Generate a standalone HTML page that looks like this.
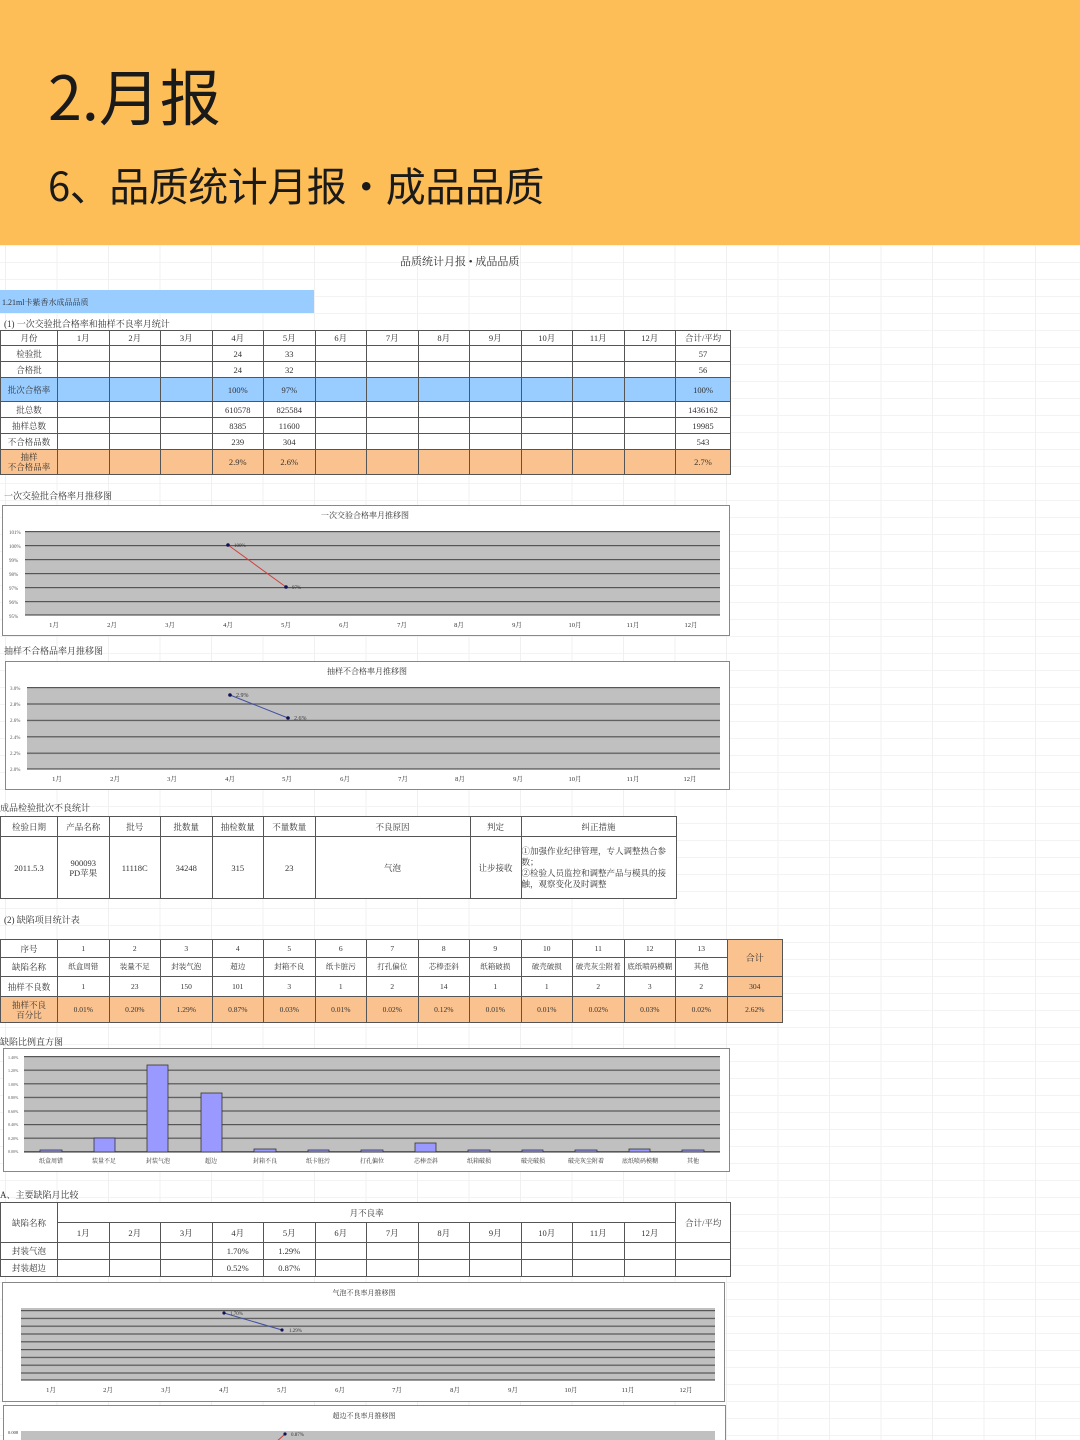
<!DOCTYPE html>
<html><head><meta charset="utf-8"><style>
*{margin:0;padding:0;box-sizing:border-box}
body{width:1080px;height:1440px;overflow:hidden;background:#fff;position:relative;font-family:"Liberation Sans","Noto Sans CJK SC",sans-serif;color:#222}
.hdr{position:absolute;left:0;top:0;width:1080px;height:245px;background:#FDBE58}
.h1{position:absolute;left:48px;top:54px;font-size:61px;color:#1a1a1a;font-family:"Noto Sans CJK SC",sans-serif;line-height:80px}
.h2{position:absolute;left:48px;top:156px;font-size:40px;color:#1a1a1a;font-family:"Noto Sans CJK SC",sans-serif;line-height:56px;letter-spacing:-0.5px}
.grid{position:absolute;left:0;top:245px;width:1080px;height:1195px;background-image:linear-gradient(90deg,#f0f0f0 1px,transparent 1px),linear-gradient(#f3f3f3 1px,transparent 1px);background-size:51.5px 100%,100% 17px;background-position:5px 0,0 0}
.t{position:absolute;font-size:9px;color:#333;white-space:nowrap;font-family:"Liberation Serif","Noto Serif CJK SC",serif}
table{position:absolute;border-collapse:collapse;table-layout:fixed;font-family:"Liberation Serif","Noto Serif CJK SC",serif;font-size:8.5px;color:#333;background:#fff}
td{border:1px solid #555;text-align:center;padding:0;overflow:hidden;line-height:10px}
.b td{background:#99CCFF}
.o td{background:#FAC28E}
.oc{background:#FAC28E}
svg{position:absolute;left:0;top:0}
</style></head><body>
<div class="hdr"><div class="h1">2.月报</div><div class="h2">6、品质统计月报·成品品质</div></div>
<div class="grid"></div>
<div class="t" style="left:400px;top:253px;font-size:11px">品质统计月报 • 成品品质</div>
<div style="position:absolute;left:0;top:290px;width:314px;height:23px;background:#99CCFF"></div>
<div class="t" style="left:2px;top:297px;font-size:8px">1.21ml卡紫香水成品品质</div>
<div class="t" style="left:4px;top:317px">(1) 一次交验批合格率和抽样不良率月统计</div>

<table style="left:0;top:330px;width:730px">
<colgroup><col style="width:57px"><col span="12" style="width:51.5px"><col style="width:55px"></colgroup>
<tr style="height:15px"><td>月份</td><td>1月</td><td>2月</td><td>3月</td><td>4月</td><td>5月</td><td>6月</td><td>7月</td><td>8月</td><td>9月</td><td>10月</td><td>11月</td><td>12月</td><td>合计/平均</td></tr>
<tr style="height:16px"><td>检验批</td><td></td><td></td><td></td><td>24</td><td>33</td><td></td><td></td><td></td><td></td><td></td><td></td><td></td><td>57</td></tr>
<tr style="height:16px"><td>合格批</td><td></td><td></td><td></td><td>24</td><td>32</td><td></td><td></td><td></td><td></td><td></td><td></td><td></td><td>56</td></tr>
<tr class="b" style="height:24px"><td>批次合格率</td><td></td><td></td><td></td><td>100%</td><td>97%</td><td></td><td></td><td></td><td></td><td></td><td></td><td></td><td>100%</td></tr>
<tr style="height:16px"><td>批总数</td><td></td><td></td><td></td><td>610578</td><td>825584</td><td></td><td></td><td></td><td></td><td></td><td></td><td></td><td>1436162</td></tr>
<tr style="height:16px"><td>抽样总数</td><td></td><td></td><td></td><td>8385</td><td>11600</td><td></td><td></td><td></td><td></td><td></td><td></td><td></td><td>19985</td></tr>
<tr style="height:16px"><td>不合格品数</td><td></td><td></td><td></td><td>239</td><td>304</td><td></td><td></td><td></td><td></td><td></td><td></td><td></td><td>543</td></tr>
<tr class="o" style="height:25px"><td>抽样<br>不合格品率</td><td></td><td></td><td></td><td>2.9%</td><td>2.6%</td><td></td><td></td><td></td><td></td><td></td><td></td><td></td><td>2.7%</td></tr>
</table>

<div class="t" style="left:4px;top:489px">一次交验批合格率月推移图</div>
<div class="t" style="left:4px;top:644px">抽样不合格品率月推移图</div>
<div class="t" style="left:0;top:801px">成品检验批次不良统计</div>

<table style="left:0;top:816px;width:675px">
<colgroup><col style="width:57px"><col span="5" style="width:51.5px"><col style="width:155px"><col style="width:51px"><col style="width:155px"></colgroup>
<tr style="height:20px"><td>检验日期</td><td>产品名称</td><td>批号</td><td>批数量</td><td>抽检数量</td><td>不量数量</td><td>不良原因</td><td>判定</td><td>纠正措施</td></tr>
<tr style="height:62px"><td>2011.5.3</td><td>900093<br>PD苹果</td><td>11118C</td><td>34248</td><td>315</td><td>23</td><td>气泡</td><td>让步接收</td><td style="text-align:left;white-space:normal;line-height:11px">①加强作业纪律管理，专人调整热合参数；<br>②检验人员监控和调整产品与模具的接触，观察变化及时调整</td></tr>
</table>

<div class="t" style="left:4px;top:913px">(2) 缺陷项目统计表</div>

<table style="left:0;top:939px;width:782px;font-size:7.5px">
<colgroup><col style="width:57px"><col span="13" style="width:51.5px"><col style="width:55.5px"></colgroup>
<tr style="height:18px"><td style="font-size:8.5px">序号</td><td>1</td><td>2</td><td>3</td><td>4</td><td>5</td><td>6</td><td>7</td><td>8</td><td>9</td><td>10</td><td>11</td><td>12</td><td>13</td><td class="oc" rowspan="2" style="font-size:9px">合计</td></tr>
<tr style="height:19px"><td style="font-size:8.5px">缺陷名称</td><td>纸盒周错</td><td>装量不足</td><td>封装气泡</td><td>超边</td><td>封箱不良</td><td>纸卡脏污</td><td>打孔偏位</td><td>芯棒歪斜</td><td>纸箱破损</td><td>破壳破损</td><td>破壳灰尘附着</td><td>底纸喷码模糊</td><td>其他</td></tr>
<tr style="height:20px"><td style="font-size:8.5px">抽样不良数</td><td>1</td><td>23</td><td>150</td><td>101</td><td>3</td><td>1</td><td>2</td><td>14</td><td>1</td><td>1</td><td>2</td><td>3</td><td>2</td><td class="oc">304</td></tr>
<tr class="o" style="height:26px"><td style="font-size:8.5px">抽样不良<br>百分比</td><td>0.01%</td><td>0.20%</td><td>1.29%</td><td>0.87%</td><td>0.03%</td><td>0.01%</td><td>0.02%</td><td>0.12%</td><td>0.01%</td><td>0.01%</td><td>0.02%</td><td>0.03%</td><td>0.02%</td><td>2.62%</td></tr>
</table>

<div class="t" style="left:0;top:1035px">缺陷比例直方图</div>
<div class="t" style="left:0;top:1188px">A、主要缺陷月比较</div>

<table style="left:0;top:1202px;width:730px">
<colgroup><col style="width:57px"><col span="12" style="width:51.5px"><col style="width:55px"></colgroup>
<tr style="height:20px"><td rowspan="2">缺陷名称</td><td colspan="12">月不良率</td><td rowspan="2">合计/平均</td></tr>
<tr style="height:20px"><td>1月</td><td>2月</td><td>3月</td><td>4月</td><td>5月</td><td>6月</td><td>7月</td><td>8月</td><td>9月</td><td>10月</td><td>11月</td><td>12月</td></tr>
<tr style="height:17px"><td>封装气泡</td><td></td><td></td><td></td><td>1.70%</td><td>1.29%</td><td></td><td></td><td></td><td></td><td></td><td></td><td></td><td></td></tr>
<tr style="height:17px"><td>封装超边</td><td></td><td></td><td></td><td>0.52%</td><td>0.87%</td><td></td><td></td><td></td><td></td><td></td><td></td><td></td><td></td></tr>
</table>

<svg width="1080" height="1440" viewBox="0 0 1080 1440" font-family="Liberation Serif,Noto Serif CJK SC,serif" font-size="7" fill="#333">
<defs>
<pattern id="g14" width="10" height="14" patternUnits="userSpaceOnUse" y="531"><rect width="10" height="14" fill="#c0c0c0"/><rect width="10" height="1.2" fill="#555"/></pattern>
<pattern id="g16" width="10" height="16.4" patternUnits="userSpaceOnUse" y="687"><rect width="10" height="16.4" fill="#c0c0c0"/><rect width="10" height="1.2" fill="#555"/></pattern>
<pattern id="g13" width="10" height="13.6" patternUnits="userSpaceOnUse" y="1056"><rect width="10" height="13.6" fill="#c0c0c0"/><rect width="10" height="1.2" fill="#555"/></pattern>
<pattern id="g8" width="10" height="7.8" patternUnits="userSpaceOnUse" y="1310"><rect width="10" height="7.8" fill="#c0c0c0"/><rect width="10" height="1.2" fill="#555"/></pattern>
</defs>
<rect x="2.5" y="505.5" width="727" height="130" fill="#fff" stroke="#888"/>
<text x="365" y="518" font-size="8" text-anchor="middle">一次交验合格率月推移图</text>
<rect x="25" y="531" width="695" height="84" fill="url(#g14)"/>
<line x1="25" y1="615" x2="720" y2="615" stroke="#333"/>
<g font-size="5" fill="#555"><text x="9" y="534">101%</text><text x="9" y="548">100%</text><text x="9" y="562">99%</text><text x="9" y="576">98%</text><text x="9" y="590">97%</text><text x="9" y="604">96%</text><text x="9" y="618">95%</text></g>
<line x1="228" y1="545" x2="286" y2="587" stroke="#d04040" stroke-width="1"/>
<circle cx="228" cy="545" r="1.8" fill="#115"/><circle cx="286" cy="587" r="1.8" fill="#115"/>
<text x="234" y="547" font-size="5">100%</text><text x="292" y="589" font-size="5">97%</text>
<g text-anchor="middle" font-size="6.5"><text x="54" y="627">1月</text><text x="112" y="627">2月</text><text x="170" y="627">3月</text><text x="228" y="627">4月</text><text x="286" y="627">5月</text><text x="344" y="627">6月</text><text x="402" y="627">7月</text><text x="459" y="627">8月</text><text x="517" y="627">9月</text><text x="575" y="627">10月</text><text x="633" y="627">11月</text><text x="691" y="627">12月</text></g>
<rect x="5.5" y="661.5" width="724" height="128" fill="#fff" stroke="#888"/>
<text x="367" y="674" font-size="8" text-anchor="middle">抽样不合格率月推移图</text>
<rect x="27" y="687" width="693" height="82" fill="url(#g16)"/>
<line x1="27" y1="769" x2="720" y2="769" stroke="#333"/>
<g font-size="5" fill="#555"><text x="10" y="690">3.0%</text><text x="10" y="706">2.8%</text><text x="10" y="722">2.6%</text><text x="10" y="739">2.4%</text><text x="10" y="755">2.2%</text><text x="10" y="771">2.0%</text></g>
<line x1="230" y1="695" x2="288" y2="718" stroke="#4050a0" stroke-width="1"/>
<circle cx="230" cy="695" r="1.8" fill="#115"/><circle cx="288" cy="718" r="1.8" fill="#115"/>
<text x="236" y="697" font-size="6">2.9%</text><text x="294" y="720" font-size="6">2.6%</text>
<g text-anchor="middle" font-size="6.5"><text x="57" y="781">1月</text><text x="115" y="781">2月</text><text x="172" y="781">3月</text><text x="230" y="781">4月</text><text x="287" y="781">5月</text><text x="345" y="781">6月</text><text x="403" y="781">7月</text><text x="460" y="781">8月</text><text x="518" y="781">9月</text><text x="575" y="781">10月</text><text x="633" y="781">11月</text><text x="690" y="781">12月</text></g>
<rect x="3.5" y="1048.5" width="726" height="123" fill="#fff" stroke="#888"/>
<rect x="24" y="1056" width="696" height="96" fill="url(#g13)"/>
<line x1="24" y1="1152" x2="720" y2="1152" stroke="#333"/>
<g font-size="4" fill="#555"><text x="8" y="1059">1.40%</text><text x="8" y="1072">1.20%</text><text x="8" y="1086">1.00%</text><text x="8" y="1099">0.80%</text><text x="8" y="1113">0.60%</text><text x="8" y="1126">0.40%</text><text x="8" y="1140">0.20%</text><text x="8" y="1153">0.00%</text></g>
<g fill="#9999ff" stroke="#333" stroke-width="0.8">
<rect x="40" y="1150" width="22" height="2"/><rect x="94" y="1138" width="21" height="14"/><rect x="147" y="1065" width="21" height="87"/><rect x="201" y="1093" width="21" height="59"/><rect x="254" y="1149" width="22" height="3"/><rect x="308" y="1150" width="21" height="2"/><rect x="361" y="1150" width="22" height="2"/><rect x="415" y="1143" width="21" height="9"/><rect x="468" y="1150" width="22" height="2"/><rect x="522" y="1150" width="21" height="2"/><rect x="575" y="1150" width="22" height="2"/><rect x="629" y="1149" width="21" height="3"/><rect x="682" y="1150" width="22" height="2"/>
</g>
<g text-anchor="middle" font-size="6"><text x="51" y="1163">纸盒周错</text><text x="104" y="1163">装量不足</text><text x="158" y="1163">封装气泡</text><text x="211" y="1163">超边</text><text x="265" y="1163">封箱不良</text><text x="318" y="1163">纸卡脏污</text><text x="372" y="1163">打孔偏位</text><text x="426" y="1163">芯棒歪斜</text><text x="479" y="1163">纸箱破损</text><text x="533" y="1163">破壳破损</text><text x="586" y="1163">破壳灰尘附着</text><text x="640" y="1163">底纸喷码模糊</text><text x="693" y="1163">其他</text></g>
<rect x="2.5" y="1282.5" width="722" height="119" fill="#fff" stroke="#888"/>
<text x="364" y="1295" font-size="7" text-anchor="middle">气泡不良率月推移图</text>
<rect x="21" y="1308" width="694" height="72" fill="url(#g8)"/>
<line x1="21" y1="1380" x2="715" y2="1380" stroke="#333"/>
<line x1="224" y1="1313" x2="282" y2="1330" stroke="#4050a0"/>
<circle cx="224" cy="1313" r="1.6" fill="#115"/><circle cx="282" cy="1330" r="1.6" fill="#115"/>
<text x="230" y="1315" font-size="5">1.70%</text><text x="289" y="1332" font-size="5">1.29%</text>
<g text-anchor="middle" font-size="6.5"><text x="51" y="1392">1月</text><text x="108" y="1392">2月</text><text x="166" y="1392">3月</text><text x="224" y="1392">4月</text><text x="282" y="1392">5月</text><text x="340" y="1392">6月</text><text x="397" y="1392">7月</text><text x="455" y="1392">8月</text><text x="513" y="1392">9月</text><text x="571" y="1392">10月</text><text x="628" y="1392">11月</text><text x="686" y="1392">12月</text></g>
<rect x="3.5" y="1405.5" width="722" height="40" fill="#fff" stroke="#888"/>
<text x="364" y="1418" font-size="7" text-anchor="middle">超边不良率月推移图</text>
<rect x="21" y="1431" width="694" height="12" fill="#c0c0c0"/>
<text x="8" y="1434" font-size="4.5">0.008</text>
<line x1="276" y1="1442" x2="284" y2="1435" stroke="#d04040"/>
<circle cx="285" cy="1434" r="1.6" fill="#115"/><text x="291" y="1436" font-size="5">0.87%</text>
</svg>
</body></html>
